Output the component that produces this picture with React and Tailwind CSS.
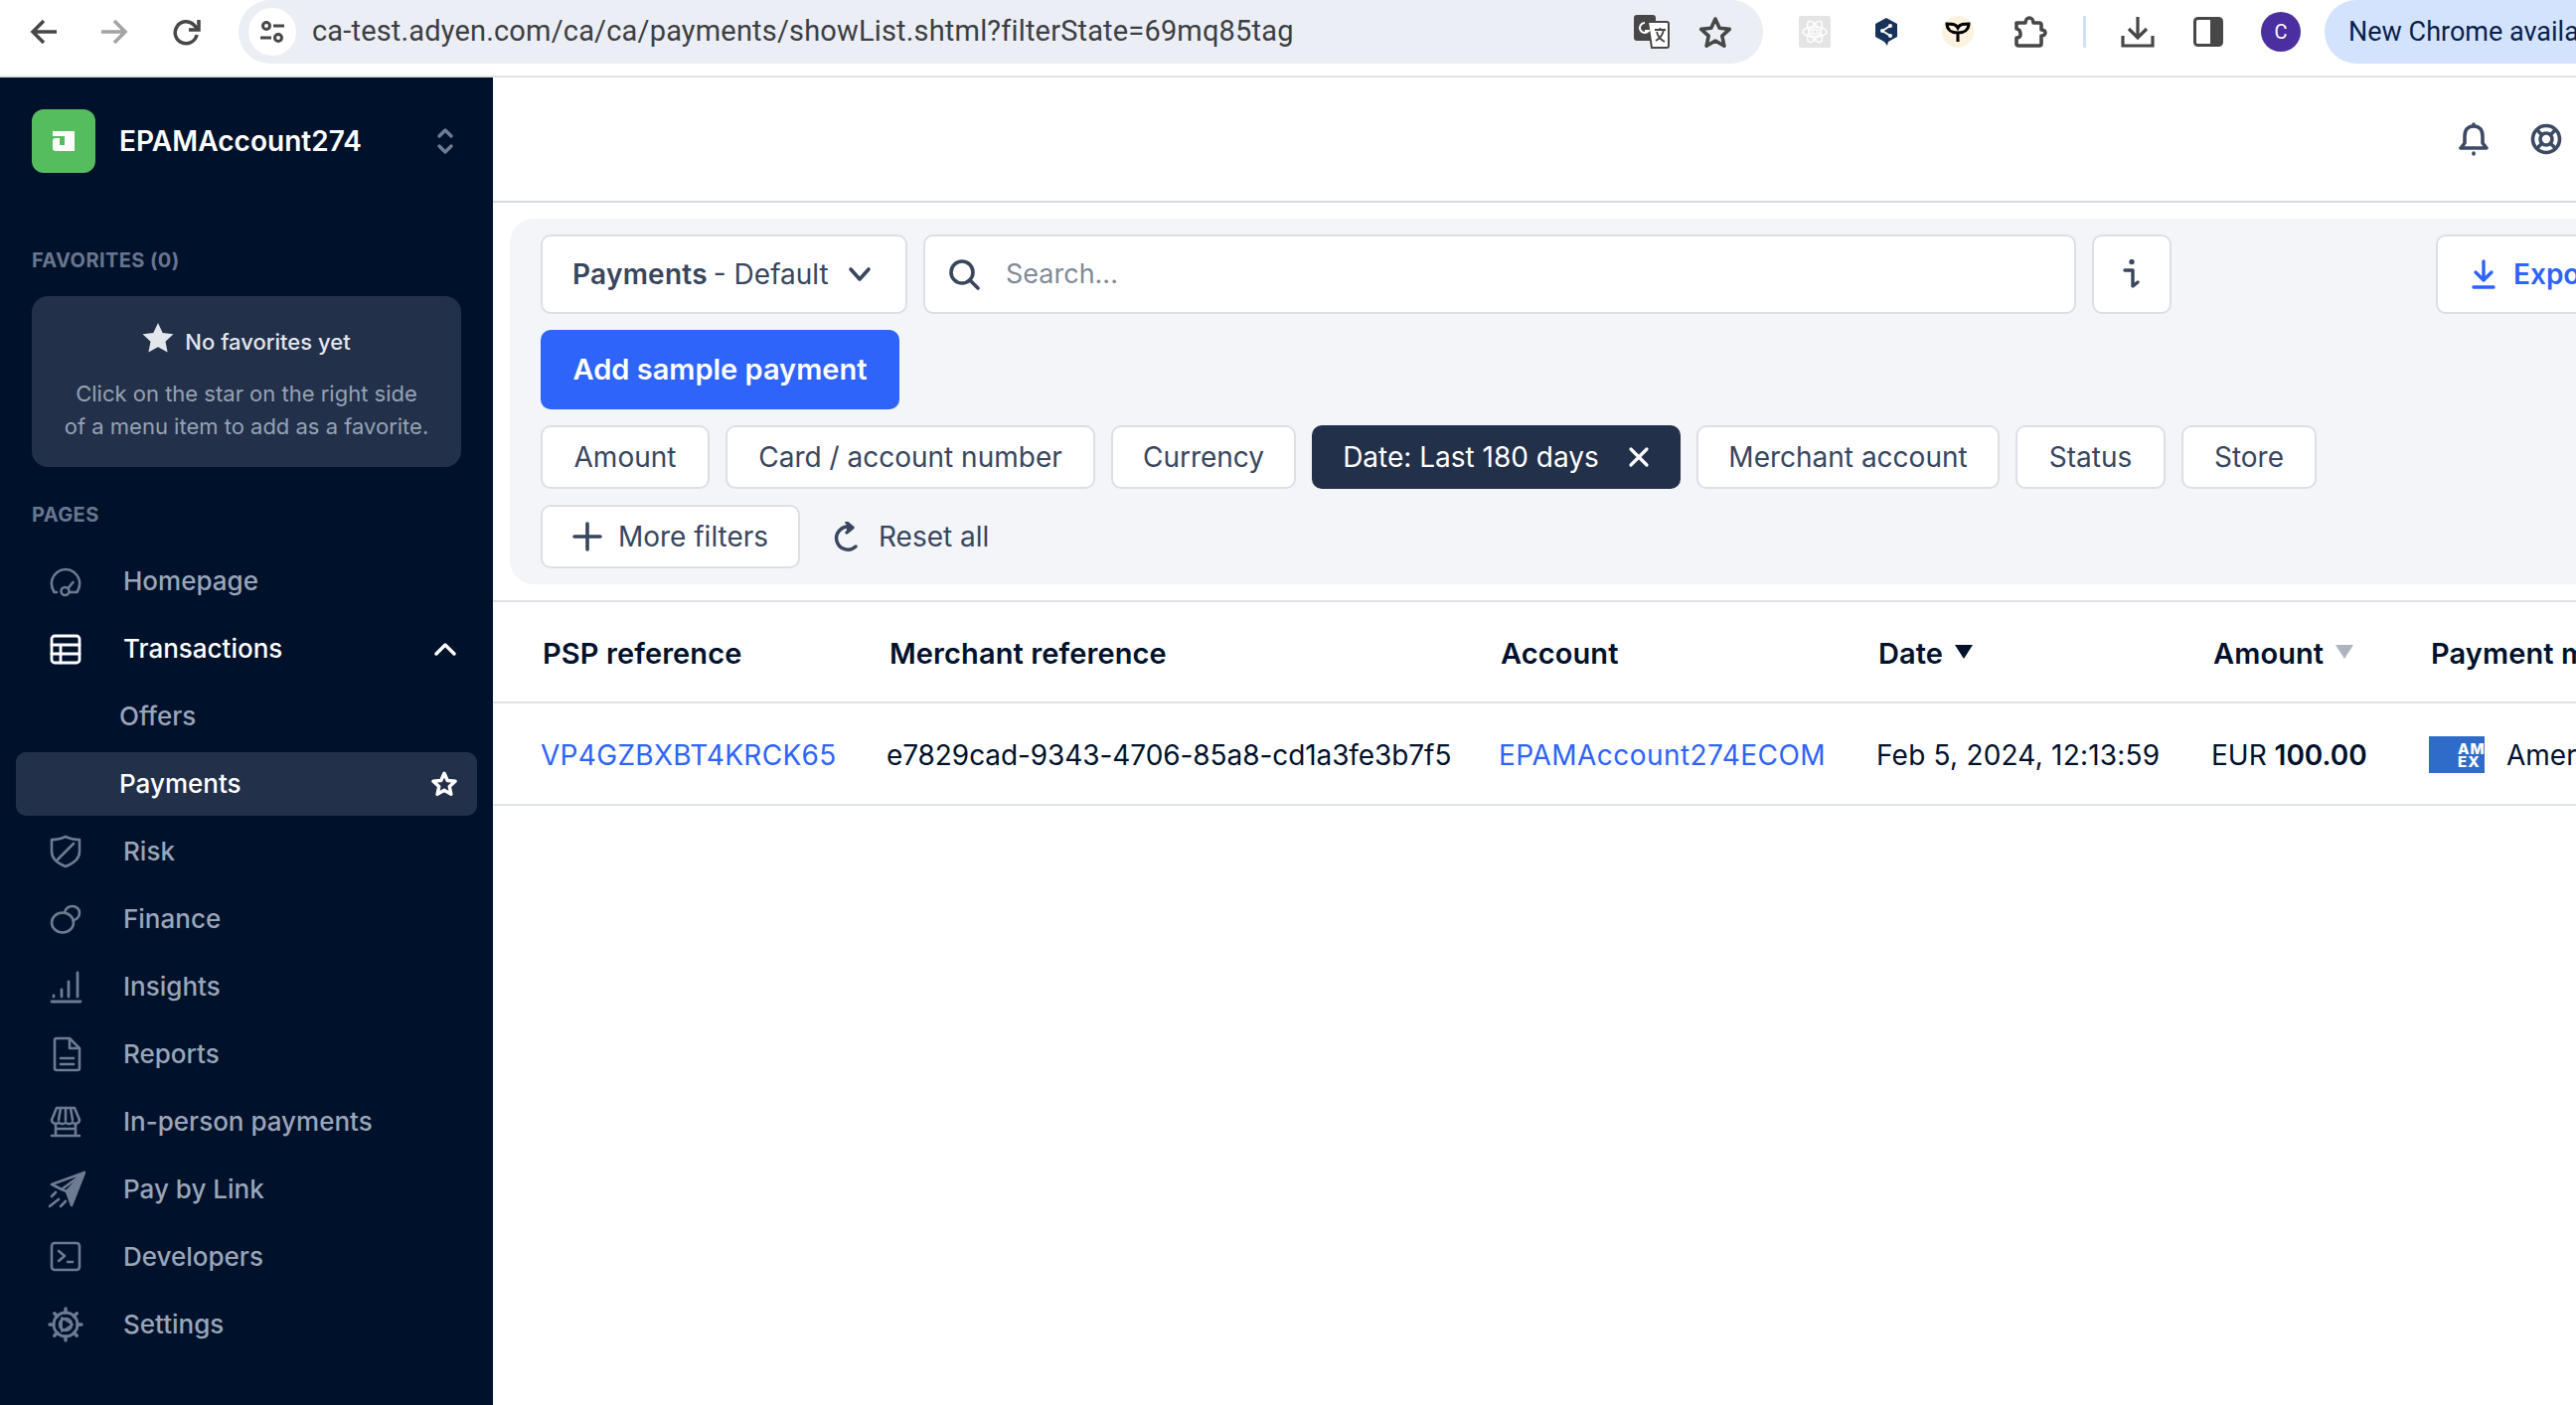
import React from "react";

const S = ({ size = 32, children, className = "", fill = "none", sw = 2.6, vb = "0 0 32 32" }) => (
  <svg width={size} height={size} viewBox={vb} fill={fill} stroke={fill === "none" ? "currentColor" : "none"} strokeWidth={sw} strokeLinecap="round" strokeLinejoin="round" className={`shrink-0 ${className}`}>
    {children}
  </svg>
);

const navIcons = {
  Homepage: (
    <S><path d="M7 27H4.500C2 23 1 19 2.500 14 4.500 8 10 4 16 4s11.500 4 13.500 10c1.500 5 .5 9-2 13H20" /><circle cx="15.500" cy="26" r="4" /><path d="M18.500 23l5-6" /></S>
  ),
  Transactions: (
    <S sw={2.8}><rect x="2" y="3" width="28" height="27" rx="3" /><path d="M2 12h28M2 21h28M11 12v18" /></S>
  ),
  Risk: (
    <S size={34} vb="0 0 34 34" className="-ml-[1px]"><path d="M17 2c4 2 9 3 14 3v12c0 7-6 12-14 15C9 29 3 24 3 17V5c5 0 10-1 14-3z" /><path d="M9 25 25 9" /></S>
  ),
  Finance: (
    <S><ellipse cx="13" cy="19.500" rx="11" ry="10" /><path d="M15 9.500C16 5.500 19 3 23 3c4 0 7 3 7 6.500 0 3.500-2.500 7-6.500 8" /></S>
  ),
  Insights: (
    <S size={34} vb="0 0 34 34"><path d="M2 32h29" strokeWidth="2.800" /><path d="M4 26v1M12 20v7M19 12v15M28 3v24" strokeWidth="2.800" /></S>
  ),
  Reports: (
    <S size={36} vb="0 0 36 36"><path d="M7 2h13l10 10v20a2 2 0 0 1-2 2H7a2 2 0 0 1-2-2V4a2 2 0 0 1 2-2z" /><path d="M20 2v10h10M11 22h13M11 28h13" /></S>
  ),
  "In-person payments": (
    <S><path d="M7 2h18l5 12a4 4 0 0 1-7 2.500 4.500 4.500 0 0 1-7 0 4.500 4.500 0 0 1-7 0A4 4 0 0 1 2 14L7 2z" /><path d="M11 2l-2 12M21 2l2 12M16 2v12M6 18v12M26 18v12M2 30h28M6 23h20" /></S>
  ),
  "Pay by Link": (
    <S size={38} vb="0 0 38 38" className="-ml-[2px]"><path d="M37 2 24 35 19 21z" fill="currentColor" stroke="currentColor" /><path d="M37 2 4 14l10 5 23-17M14 19l5 2" /><path d="M2 36l9-7M13 36l5-5M4 26l4-4" /></S>
  ),
  Developers: (
    <S><rect x="2" y="2" width="28" height="27" rx="3" /><path d="M9 10l6 5-6 5M18 21h5" /></S>
  ),
  Settings: (
    <S size={36} vb="0 0 36 36" className="-ml-[2px]"><circle cx="18" cy="18" r="12" strokeWidth="2.800" /><circle cx="18" cy="18" r="6" /><path d="M14 11l11 7-11 7z" strokeWidth="1.800" /><path d="M18 2v4M18 30v4M2 18h4M30 18h4M6.700 6.700l3 3M26.300 26.300l3 3M29.300 6.700l-3 3M9.700 26.300l-3 3" strokeWidth="3.400" /></S>
  ),
};

function NavItem({ label, active, sub, chevron, star }) {
  return (
    <div className={`h-[68px] flex items-center ${active ? "text-white" : "text-[#99a5b8]"}`}>
      <div className={`flex items-center w-[464px] ml-4 h-[64px] rounded-[10px] ${star ? "bg-[#22304a]" : ""}`}>
        {!sub && (
          <span className={`w-[100px] pl-[34px] h-[38px] flex items-center ${active ? "text-white" : "text-[#6e7b90]"}`}>
            {navIcons[label]}
          </span>
        )}
        <span className={`text-[26px] font-medium leading-none ${sub ? "ml-[104px]" : "ml-[8px]"}`}>{label}</span>
        {chevron && (
          <svg width="22" height="14" viewBox="0 0 22 14" fill="none" stroke="white" strokeWidth="3.400" strokeLinecap="round" strokeLinejoin="round" className="ml-auto mr-[21px]"><path d="M2 12 11 3l9 9" /></svg>
        )}
        {star && (
          <svg width="28" height="28" viewBox="0 0 26 26" fill="none" stroke="white" strokeWidth="3.200" strokeLinejoin="round" className="ml-auto mr-[19px]"><path d="M13 3l3 6.700 7.300.8-5.400 4.900 1.500 7.200L13 18.900l-6.400 3.700 1.500-7.200-5.400-4.900 7.300-.8z" /></svg>
        )}
      </div>
    </div>
  );
}

function Sidebar() {
  const rest = ["Risk", "Finance", "Insights", "Reports", "In-person payments", "Pay by Link", "Developers", "Settings"];
  return (
    <aside className="w-[496px] shrink-0 bg-[#00112c] flex flex-col">
      <div className="flex items-center h-[64px] mt-[32px] pl-[32px]">
        <div className="w-[64px] h-[64px] rounded-[12px] bg-[#56bd5f] flex items-center justify-center">
          <svg width="22" height="20" viewBox="0 0 22 20" fill="white"><path d="M0 0H22V20H3a3 3 0 0 1-3-3V10a3 3 0 0 1 3-3H7V14H12V5H0z" /></svg>
        </div>
        <span className="ml-[24px] text-white text-[28px] font-semibold tracking-[0.05px]">EPAMAccount274</span>
        <svg width="18" height="28" viewBox="0 0 18 28" fill="none" stroke="#6f7d92" strokeWidth="3.400" strokeLinecap="round" strokeLinejoin="round" className="ml-auto mr-[39px]"><path d="M3 9l6-6 6 6M3 19l6 6 6-6" /></svg>
      </div>
      <div className="mt-[76px] pl-[32px] text-[20px] leading-[24px] font-bold tracking-[0.4px] text-[#68768c]">FAVORITES (0)</div>
      <div className="mt-[24px] mx-[32px] h-[172px] rounded-[16px] bg-[#22304a] flex flex-col items-center pt-[24px]">
        <div className="flex items-center gap-[11px] text-[#e3e6ea] h-[36px]">
          <svg width="32" height="32" viewBox="0 0 32 32" fill="#e3e6ea"><path d="M16 1l4.700 10 10.800 1.300-8 7.400 2.100 10.800L16 25.200 6.400 30.500l2.100-10.800-8-7.400L11.300 11z" /></svg>
          <span className="text-[22px] font-medium leading-none mt-[8px]">No favorites yet</span>
        </div>
        <div className="mt-[22px] text-[22px] leading-[33px] text-[#97a2b2] text-center whitespace-nowrap">
          Click on the star on the right side<br />of a menu item to add as a favorite.
        </div>
      </div>
      <div className="mt-[36px] pl-[32px] text-[20px] leading-[24px] font-bold tracking-[0.4px] text-[#68768c]">PAGES</div>
      <div className="mt-[21px] flex flex-col">
        <NavItem label="Homepage" />
        <NavItem label="Transactions" active chevron />
        <NavItem label="Offers" sub />
        <NavItem label="Payments" sub active star />
        {rest.map((r) => <NavItem key={r} label={r} />)}
      </div>
    </aside>
  );
}

function ChromeBar() {
  const c = "#474747";
  return (
    <div className="h-[78px] shrink-0 bg-white border-b-2 border-[#e1e1e1] flex items-start">
      <div className="flex items-center h-[64px] w-[240px] shrink-0 pl-[30px]">
        <svg width="28" height="26" viewBox="0 0 28 26" fill="none" stroke={c} strokeWidth="3.500"><path d="M27 13H3M14 2 3 13l11 11" /></svg>
        <svg width="28" height="26" viewBox="0 0 28 26" fill="none" stroke="#a3a3a3" strokeWidth="3.500" className="ml-[43px]"><path d="M1 13h24M14 2l11 11-11 11" /></svg>
        <svg width="28" height="28" viewBox="0 0 28 28" fill="none" stroke={c} strokeWidth="3.500" className="ml-[45px]"><path d="M24 17a11 11 0 1 1-3-10l4 4" /><path d="M26 2v10H16" strokeLinejoin="miter" /></svg>
      </div>
      <div className="w-[1534px] h-[64px] rounded-[40px] bg-[#ebeef5] flex items-center pl-[10px] shrink-0">
        <div className="w-[48px] h-[48px] rounded-full bg-white flex items-center justify-center shrink-0">
          <svg width="26" height="26" viewBox="0 0 26 26" fill="none" stroke={c} strokeWidth="3"><circle cx="7" cy="7" r="3.500" /><path d="M14 7h11M1 19h11" /><circle cx="19" cy="19" r="3.500" /></svg>
        </div>
        <span className="ml-[16px] font-['Roboto'] text-[29px] text-[#3c3f43] tracking-[0.17px] whitespace-nowrap">ca-test.adyen.com/ca/ca/payments/showList.shtml?filterState=69mq85tag</span>
        <svg width="36" height="34" viewBox="0 0 36 34" className="ml-auto shrink-0"><rect x="0" y="0" width="22" height="26" rx="3" fill={c} /><path d="M14 7h19a2 2 0 0 1 2 2v22a2 2 0 0 1-2 2H18z" fill="white" stroke={c} strokeWidth="2" /><path d="M21 15h11M26.500 13v2M30 15c-1 5-4 9-8 11M23 17c1 4 4 8 8 10" stroke={c} strokeWidth="1.800" fill="none" /><path d="M11 8a5 5 0 1 0 4 8h-4" stroke="white" strokeWidth="2" fill="none" /></svg>
        <svg width="34" height="32" viewBox="0 0 34 32" fill="none" stroke={c} strokeWidth="3.600" strokeLinejoin="round" className="ml-[29px] mr-[31px] shrink-0"><path d="M17 3l4.200 9.300 10.100 1.100-7.500 6.800 2.100 10L17 25l-8.900 5.200 2.100-10-7.500-6.800 10.100-1.100z" /></svg>
      </div>
      <div className="h-[64px] flex items-center shrink-0">
        <div className="ml-[36px] w-[32px] h-[32px] bg-[#e4e4e4] rounded-[2px] flex items-center justify-center shrink-0">
          <svg width="26" height="26" viewBox="0 0 26 26" fill="none" stroke="white" strokeWidth="1.500"><circle cx="13" cy="13" r="2.500" /><ellipse cx="13" cy="13" rx="12" ry="5" /><ellipse cx="13" cy="13" rx="12" ry="5" transform="rotate(60 13 13)" /><ellipse cx="13" cy="13" rx="12" ry="5" transform="rotate(120 13 13)" /></svg>
        </div>
        <svg width="24" height="28" viewBox="0 0 24 28" className="ml-[44px] shrink-0"><path d="M12 0l11 6v13l-9 5-1 4-3-4-9-5V6z" fill="#17325a" /><path d="M8 13l8-5M8 13l8 5" stroke="white" strokeWidth="2" fill="none" /><circle cx="8" cy="13" r="2" fill="white" /><circle cx="16" cy="8" r="2" fill="white" /><circle cx="16" cy="18" r="2" fill="white" /></svg>
        <div className="ml-[44px] w-[32px] h-[32px] rounded-full bg-[#fbf2df] flex items-center justify-center shrink-0">
          <svg width="26" height="20" viewBox="0 0 26 20" fill="none" stroke="black" strokeWidth="3"><path d="M13 20V11M13 11C7 11 2 8 2 2c5 0 9 0 11 4 2-4 6-4 11-4 0 6-5 9-11 9z" /></svg>
        </div>
        <svg width="34" height="34" viewBox="0 0 34 34" fill="none" stroke={c} strokeWidth="3.600" strokeLinejoin="round" className="ml-[40px] shrink-0"><path d="M3 8h9c0-3 2-5 4-5s4 2 4 5h6a2 2 0 0 1 2 2v5c2 0 4 1 4 3s-2 3-4 3v8a2 2 0 0 1-2 2H5a2 2 0 0 1-2-2v-6c3 0 4-1 4-3.500S6 14 3 14z" /></svg>
        <div className="ml-[36px] w-[3px] h-[32px] bg-[#d3dff3] shrink-0" />
        <svg width="34" height="32" viewBox="0 0 34 32" fill="none" stroke={c} strokeWidth="3.200" className="ml-[35px] shrink-0"><path d="M17 1v20M8 13l9 9 9-9M2 20v10h30V20" /></svg>
        <svg width="30" height="30" viewBox="0 0 30 30" className="ml-[39px] shrink-0"><rect x="1.500" y="1.500" width="27" height="27" rx="3" fill="white" stroke={c} strokeWidth="3" /><rect x="17" y="2" width="11" height="26" fill={c} /></svg>
        <div className="ml-[38px] w-[40px] h-[40px] rounded-full bg-[#4b2ea0] text-white text-[20px] flex items-center justify-center shrink-0 font-['Roboto']">C</div>
        <div className="ml-[24px] h-[64px] w-[300px] rounded-l-[32px] bg-[#d3e3fd] flex items-center pl-[24px] text-[#0a1f4d] text-[27px] whitespace-nowrap font-['Roboto'] overflow-hidden shrink-0">New Chrome available</div>
      </div>
    </div>
  );
}

function Chip({ children, dark, w }) {
  return (
    <div className={`h-[64px] rounded-[10px] flex items-center justify-center text-[28px] whitespace-nowrap shrink-0 ${w} ${dark ? "bg-[#22304a] text-white" : "bg-white border-2 border-[#dcdfe5] text-[#38465e]"}`}>
      {children}
    </div>
  );
}

function Toolbar() {
  return (
    <div className="ml-[17px] mt-[16px] h-[368px] rounded-l-[24px] bg-[#f3f5f9] pl-[31px] pt-[16px] flex flex-col shrink-0">
      <div className="flex gap-[16px] h-[80px] shrink-0">
        <div className="w-[369px] bg-white border-2 border-[#dcdfe5] rounded-[10px] flex items-center pl-[30px] text-[28px] text-[#38465e] shrink-0 whitespace-nowrap">
          <span className="font-semibold tracking-[0.25px]">Payments</span><span className="ml-[6px]">- Default</span>
          <svg width="24" height="16" viewBox="0 0 24 16" fill="none" stroke="#38465e" strokeWidth="3.600" strokeLinecap="round" strokeLinejoin="round" className="ml-[19px]"><path d="M3 3l9 10 9-10" /></svg>
        </div>
        <div className="w-[1160px] bg-white border-2 border-[#dcdfe5] rounded-[10px] flex items-center pl-[23px] shrink-0">
          <svg width="32" height="32" viewBox="0 0 32 32" fill="none" stroke="#38465e" strokeWidth="3.600" strokeLinecap="round"><circle cx="14" cy="14" r="11" /><path d="M22 22l8 8" /></svg>
          <span className="ml-[26px] text-[27px] text-[#808a9a]">Search...</span>
        </div>
        <div className="w-[80px] bg-white border-2 border-[#dcdfe5] rounded-[10px] flex items-center justify-center shrink-0">
          <svg width="20" height="30" viewBox="0 0 20 30" fill="none" stroke="#38465e" strokeWidth="3.400" strokeLinecap="round" strokeLinejoin="round"><circle cx="10" cy="2.500" r="1" fill="#38465e" /><path d="M3 11h8v15M11 27l5-4" /></svg>
        </div>
        <div className="ml-[250px] w-[200px] bg-white border-2 border-[#dcdfe5] rounded-[10px] flex items-center pl-[34px] shrink-0 text-[#2e64fa] text-[28px] font-semibold">
          <svg width="24" height="30" viewBox="0 0 24 30" fill="none" stroke="#2e64fa" strokeWidth="3.400" strokeLinecap="round" strokeLinejoin="round"><path d="M12 2v19M4 13l8 8 8-8M2 28h20" /></svg>
          <span className="ml-[18px]">Export</span>
        </div>
      </div>
      <div className="mt-[16px] w-[361px] h-[80px] rounded-[10px] bg-[#2e64fa] flex items-center justify-center text-white text-[29px] font-semibold shrink-0 whitespace-nowrap">Add sample payment</div>
      <div className="mt-[16px] flex gap-[16px] shrink-0">
        <Chip w="w-[170px]">Amount</Chip>
        <Chip w="w-[372px]">Card / account number</Chip>
        <Chip w="w-[186px]">Currency</Chip>
        <Chip dark w="w-[371px]">
          Date: Last 180 days
          <svg width="22" height="22" viewBox="0 0 22 22" fill="none" stroke="white" strokeWidth="3.200" strokeLinecap="round" className="ml-[29px]"><path d="M3 3l16 16M19 3 3 19" /></svg>
        </Chip>
        <Chip w="w-[305px]">Merchant account</Chip>
        <Chip w="w-[151px]">Status</Chip>
        <Chip w="w-[136px]">Store</Chip>
      </div>
      <div className="mt-[16px] flex items-center shrink-0">
        <Chip w="w-[261px]">
          <svg width="30" height="30" viewBox="0 0 30 30" fill="none" stroke="#38465e" strokeWidth="3.600" strokeLinecap="round" className="mr-[16px]"><path d="M15 2v26M2 15h26" /></svg>
          More filters
        </Chip>
        <svg width="26" height="30" viewBox="0 0 26 30" fill="none" stroke="#38465e" strokeWidth="3.400" strokeLinecap="round" strokeLinejoin="round" className="ml-[34px]"><path d="M22 25a11.500 11.500 0 1 1-5-19.500" /><path d="M13 1l6 5-6 5" fill="#38465e" /></svg>
        <span className="ml-[19px] text-[28px] text-[#38465e]">Reset all</span>
      </div>
    </div>
  );
}

function Table() {
  const th = "text-[29px] font-semibold text-[#00112c] whitespace-nowrap shrink-0 pl-[2px] pt-[3px] flex items-center tracking-[0.1px]";
  const td = "text-[28px] whitespace-nowrap shrink-0 pt-[2px]";
  const dark = "text-[#00112c]";
  const blue = "text-[#2e64fa]";
  return (
    <div className="mt-[16px] border-t-2 border-[#dfe2e6] shrink-0">
      <div className="h-[102px] border-b-2 border-[#dfe2e6] flex items-center pl-[48px]">
        <div className={`${th} w-[349px]`}>PSP reference</div>
        <div className={`${th} w-[615px]`}>Merchant reference</div>
        <div className={`${th} w-[380px]`}>Account</div>
        <div className={`${th} w-[337px]`}>Date
          <svg width="18" height="14" viewBox="0 0 18 14" fill="#00112c" className="ml-[12px] mb-[4px]"><path d="M0 0h18L9 14z" /></svg>
        </div>
        <div className={`${th} w-[219px]`}>Amount
          <svg width="18" height="14" viewBox="0 0 18 14" fill="#aeb4bf" className="ml-[12px] mb-[4px]"><path d="M0 0h18L9 14z" /></svg>
        </div>
        <div className={th}>Payment method</div>
      </div>
      <div className="h-[103px] border-b-2 border-[#dfe2e6] flex items-center pl-[48px]">
        <div className={`${td} w-[348px] ${blue} tracking-[0.3px]`}>VP4GZBXBT4KRCK65</div>
        <div className={`${td} w-[616px] ${dark} tracking-[-0.08px]`}>e7829cad-9343-4706-85a8-cd1a3fe3b7f5</div>
        <div className={`${td} w-[380px] ${blue} tracking-[0.45px]`}>EPAMAccount274ECOM</div>
        <div className={`${td} w-[337px] ${dark} tracking-[0.2px]`}>Feb 5, 2024, 12:13:59</div>
        <div className={`${td} w-[219px] ${dark}`}>EUR <span className="font-semibold">100.00</span></div>
        <div className={`${td} ${dark} flex items-center`}>
          <div className="w-[56px] h-[37px] bg-[#2f6cc9] flex flex-col items-start justify-center overflow-hidden text-white text-[15px] font-extrabold leading-[13px] tracking-[1px] pl-[29px] shrink-0 whitespace-nowrap">
            <span>AM</span>
            <span>EX</span>
          </div>
          <span className="ml-[22px]">American Express</span>
        </div>
      </div>
    </div>
  );
}

export default function App() {
  return (
    <div className="w-[2592px] h-[1414px] overflow-hidden flex flex-col bg-white font-['Inter',sans-serif]">
      <ChromeBar />
      <div className="flex-1 min-h-0 flex">
        <Sidebar />
        <main className="flex-1 min-w-0 flex flex-col overflow-hidden">
          <div className="h-[126px] shrink-0 border-b-2 border-[#d5dae1] flex items-center text-[#3d4a63]">
            <svg width="30" height="34" viewBox="0 0 30 34" fill="none" stroke="currentColor" strokeWidth="3.600" strokeLinejoin="round" strokeLinecap="round" className="ml-auto"><path d="M15 4c-6 0-9 4-9 10v7l-4 5h26l-4-5v-7c0-6-3-10-9-10zM15 4V2M15 31v1" /></svg>
            <svg width="32" height="32" viewBox="0 0 32 32" fill="none" stroke="currentColor" strokeWidth="3.600" className="ml-[42px] mr-[14px]"><circle cx="16" cy="16" r="13.500" /><circle cx="16" cy="16" r="6" /><path d="M7 7l5 5M25 7l-5 5M7 25l5-5M25 25l-5-5" /></svg>
          </div>
          <Toolbar />
          <Table />
        </main>
      </div>
    </div>
  );
}
